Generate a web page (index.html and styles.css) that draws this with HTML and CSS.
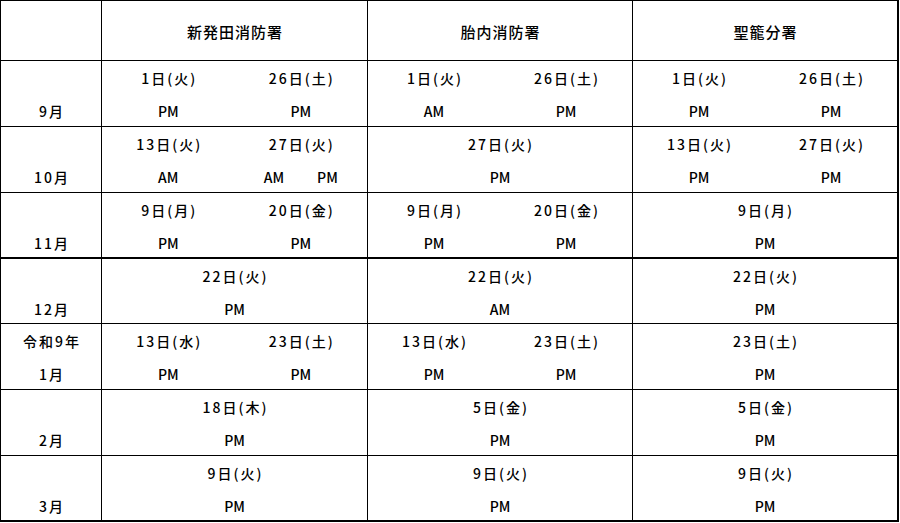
FILE: index.html
```html
<!DOCTYPE html>
<html lang="ja">
<head>
<meta charset="utf-8">
<title>日程表</title>
<link rel="stylesheet" href="styles.css">
</head>
<body>
<div class="sheet">
  <div class="cell head"></div>
  <div class="cell head">新発田消防署</div>
  <div class="cell head">胎内消防署</div>
  <div class="cell head last">聖籠分署</div>

  <!-- 9月 -->
  <div class="cell month"><span></span><span class="d">9月</span></div>
  <div class="cell split"><span class="d">1日(火)</span><span class="d">26日(土)</span><span>PM</span><span>PM</span></div>
  <div class="cell split"><span class="d">1日(火)</span><span class="d">26日(土)</span><span>AM</span><span>PM</span></div>
  <div class="cell split last"><span class="d">1日(火)</span><span class="d">26日(土)</span><span>PM</span><span>PM</span></div>

  <!-- 10月 -->
  <div class="cell month"><span></span><span class="d">10月</span></div>
  <div class="cell split"><span class="d">13日(火)</span><span class="d">27日(火)</span><span>AM</span><span class="pair"><span>AM</span><span>PM</span></span></div>
  <div class="cell single"><span class="d">27日(火)</span><span>PM</span></div>
  <div class="cell split last"><span class="d">13日(火)</span><span class="d">27日(火)</span><span>PM</span><span>PM</span></div>

  <!-- 11月 -->
  <div class="cell month thick"><span></span><span class="d">11月</span></div>
  <div class="cell split thick"><span class="d">9日(月)</span><span class="d">20日(金)</span><span>PM</span><span>PM</span></div>
  <div class="cell split thick"><span class="d">9日(月)</span><span class="d">20日(金)</span><span>PM</span><span>PM</span></div>
  <div class="cell single thick last"><span class="d">9日(月)</span><span>PM</span></div>

  <!-- 12月 -->
  <div class="cell month"><span></span><span class="d">12月</span></div>
  <div class="cell single"><span class="d">22日(火)</span><span>PM</span></div>
  <div class="cell single"><span class="d">22日(火)</span><span>AM</span></div>
  <div class="cell single last"><span class="d">22日(火)</span><span>PM</span></div>

  <!-- 令和9年 1月 -->
  <div class="cell month"><span class="d">令和9年</span><span class="d">1月</span></div>
  <div class="cell split"><span class="d">13日(水)</span><span class="d">23日(土)</span><span>PM</span><span>PM</span></div>
  <div class="cell split"><span class="d">13日(水)</span><span class="d">23日(土)</span><span>PM</span><span>PM</span></div>
  <div class="cell single last"><span class="d">23日(土)</span><span>PM</span></div>

  <!-- 2月 -->
  <div class="cell month"><span></span><span class="d">2月</span></div>
  <div class="cell single"><span class="d">18日(木)</span><span>PM</span></div>
  <div class="cell single"><span class="d">5日(金)</span><span>PM</span></div>
  <div class="cell single last"><span class="d">5日(金)</span><span>PM</span></div>

  <!-- 3月 -->
  <div class="cell month thick"><span></span><span class="d">3月</span></div>
  <div class="cell single thick"><span class="d">9日(火)</span><span>PM</span></div>
  <div class="cell single thick"><span class="d">9日(火)</span><span>PM</span></div>
  <div class="cell single thick last"><span class="d">9日(火)</span><span>PM</span></div>
</div>
</body>
</html>
```
FILE: styles.css
```css
html, body {
  margin: 0;
  padding: 0;
  background: #fff;
}

body {
  font-family: "Noto Sans CJK JP", "Noto Sans", sans-serif;
  font-size: 14px;
  font-weight: 500;
  color: #000;
}

.sheet {
  display: grid;
  grid-template-columns: 101px 266px 265px 266px;
  grid-template-rows: 60px 66px 66px 66px 65px 66px 66px 66px;
  width: max-content;
  border-top: 1px solid #000;
  border-left: 1px solid #000;
}

.cell {
  box-sizing: border-box;
  border-right: 1px solid #000;
  border-bottom: 1px solid #000;
  text-align: center;
  white-space: nowrap;
}

.cell.last {
  border-right-width: 2px;
}

.cell.thick {
  border-bottom-width: 2px;
}

.head {
  display: flex;
  align-items: center;
  justify-content: center;
  font-size: 15px;
  letter-spacing: 1px;
  padding-top: 1px;
  padding-left: 1px;
}

.month,
.single {
  display: grid;
  grid-template-rows: 34px 31px;
  line-height: 1;
  align-items: center;
}

.split {
  display: grid;
  grid-template-columns: 1fr 1fr;
  grid-template-rows: 34px 31px;
  align-items: center;
  line-height: 1;
}

.d {
  letter-spacing: 2px;
  padding-left: 2px;
}

.pair {
  display: flex;
  justify-content: center;
  gap: 33px;
}
```
